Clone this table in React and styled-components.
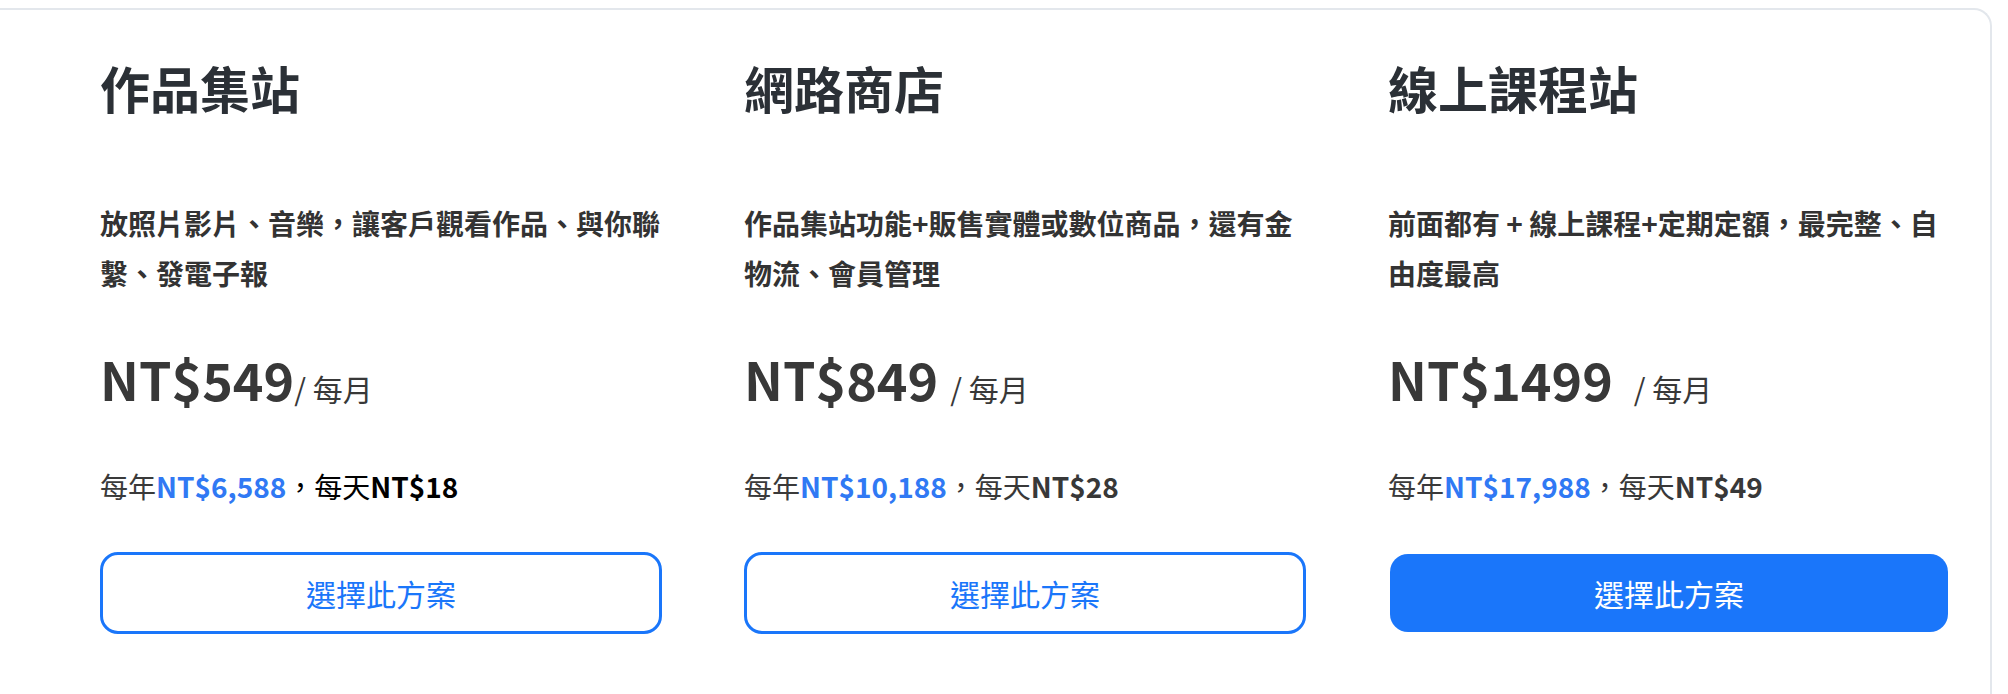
import React from 'react';
import styled, { createGlobalStyle } from 'styled-components';

const GlobalStyle = createGlobalStyle`
  body {
    margin: 0;
    background: #fff;
    font-family: "Noto Sans CJK TC", "Noto Sans", sans-serif;
  }
`;

const Page = styled.div`
  height: 694px;
  overflow: hidden;
  background: #fff;
`;

const Card = styled.div`
  box-sizing: border-box;
  width: 1992px;
  height: 700px;
  margin-top: 8px;
  padding: 47px 40px 0 100px;
  border-top: 2px solid #e3e7ec;
  border-right: 2px solid #e3e7ec;
  border-top-right-radius: 18px;
`;

const PlanGrid = styled.div`
  display: grid;
  grid-template-columns: repeat(3, 562px);
  column-gap: 82px;
`;

const Plan = styled.div`
  display: flex;
  flex-direction: column;
`;

const Title = styled.h2`
  margin: 0;
  font-size: 50px;
  line-height: 60px;
  font-weight: 700;
  color: #2b3036;
`;

const Desc = styled.p`
  margin: 81px 0 0;
  height: 100px;
  font-size: 28px;
  line-height: 50px;
  font-weight: 700;
  color: #333;
`;

const PriceRow = styled.div`
  margin-top: 46px;
  line-height: 70px;
  color: #383838;
  white-space: nowrap;
`;

const Amount = styled.span`
  font-size: 52px;
  font-weight: 700;
`;

const Unit = styled.span`
  margin-left: ${(p) => p.gap}px;
  font-size: 30px;
  font-weight: 400;
`;

const Yearly = styled.div`
  margin-top: 37px;
  font-size: 28px;
  line-height: 40px;
  color: #3a3a3a;
  white-space: nowrap;
`;

const Blue = styled.b`
  color: #3079f4;
  font-weight: 700;
`;

const Daily = styled.span`
  color: ${(p) => (p.dark ? '#000' : '#383838')};
`;

const ChooseButton = styled.button`
  box-sizing: border-box;
  margin: ${(p) => (p.primary ? '48px 2px 2px' : '46px 0 0')};
  height: ${(p) => (p.primary ? '78px' : '82px')};
  border: ${(p) => (p.primary ? 'none' : '3px solid #1a76fa')};
  border-radius: 18px;
  background: ${(p) => (p.primary ? '#1a76fa' : '#fff')};
  color: ${(p) => (p.primary ? '#fff' : '#1a76fa')};
  font-family: inherit;
  font-size: 30px;
  font-weight: 400;
  cursor: pointer;
`;

const plans = [
  {
    title: '作品集站',
    desc: '放照片影片、音樂，讓客戶觀看作品、與你聯繫、發電子報',
    price: 'NT$549',
    gap: 0,
    yearly: 'NT$6,588',
    daily: 'NT$18',
    dark: true,
  },
  {
    title: '網路商店',
    desc: '作品集站功能+販售實體或數位商品，還有金物流、會員管理',
    price: 'NT$849',
    gap: 12,
    yearly: 'NT$10,188',
    daily: 'NT$28',
  },
  {
    title: '線上課程站',
    desc: '前面都有 + 線上課程+定期定額，最完整、自由度最高',
    price: 'NT$1499',
    gap: 21,
    yearly: 'NT$17,988',
    daily: 'NT$49',
    primary: true,
  },
];

function App() {
  return (
    <Page>
      <GlobalStyle />
      <Card>
        <PlanGrid>
          {plans.map((plan) => (
            <Plan key={plan.title}>
              <Title>{plan.title}</Title>
              <Desc>{plan.desc}</Desc>
              <PriceRow>
                <Amount>{plan.price}</Amount>
                <Unit gap={plan.gap}>/ 每月</Unit>
              </PriceRow>
              <Yearly>
                每年<Blue>{plan.yearly}</Blue>
                <Daily dark={plan.dark}>
                  ，每天<b>{plan.daily}</b>
                </Daily>
              </Yearly>
              <ChooseButton primary={plan.primary}>選擇此方案</ChooseButton>
            </Plan>
          ))}
        </PlanGrid>
      </Card>
    </Page>
  );
}

export default App;
